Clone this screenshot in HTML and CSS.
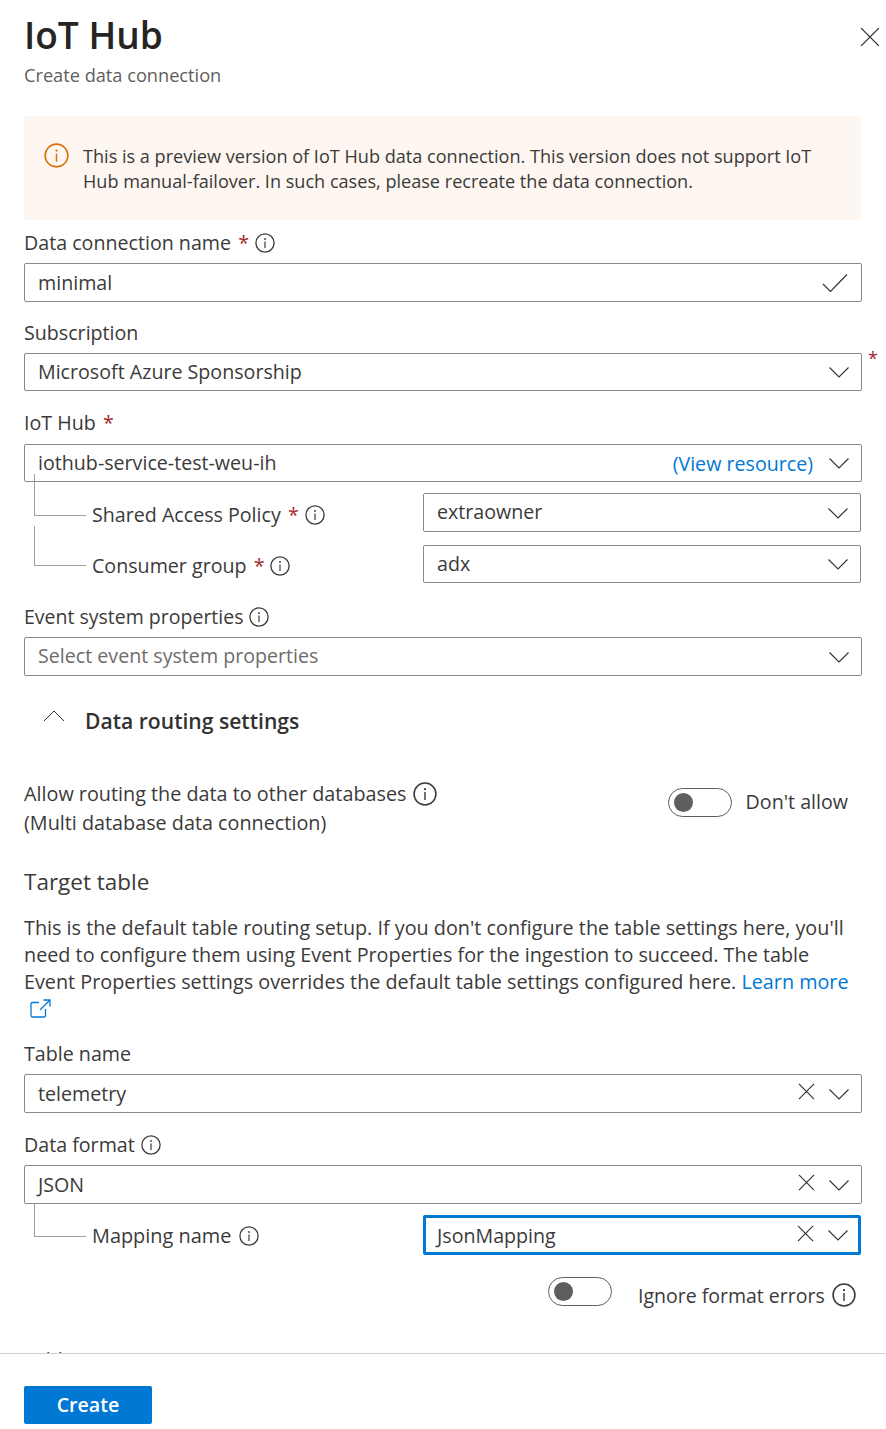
FILE: index.html
```html
<!DOCTYPE html>
<html lang="en">
<head>
<meta charset="utf-8">
<title>IoT Hub</title>
<link rel="stylesheet" href="styles.css">
</head>
<body>
<svg class="defs" aria-hidden="true">
  <symbol id="chev" viewBox="0 0 20 12"><path d="M.5 1.500 10 11 19.500 1.500" fill="none" stroke="currentColor" stroke-width="1.1"/></symbol>
  <symbol id="x" viewBox="0 0 18 18"><path d="M1 1 17 17M17 1 1 17" fill="none" stroke="currentColor" stroke-width="1.2"/></symbol>
  <symbol id="info" viewBox="0 0 20 20"><circle cx="10" cy="10" r="9.1" fill="none" stroke="currentColor" stroke-width="1.3"/><circle cx="10" cy="6" r=".9" fill="currentColor"/><path d="M10 8.400V15" stroke="currentColor" stroke-width="1.2"/></symbol>
</svg>
<div class="panel">
  <main class="scroll">
    <header class="head">
      <div>
        <h1 class="title">IoT Hub</h1>
        <p class="subtitle">Create data connection</p>
      </div>
      <button class="close" aria-label="Close"><svg class="ic-close"><use href="#x"/></svg></button>
    </header>

    <section class="banner">
      <svg class="ic-banner"><use href="#info"/></svg>
      <p class="banner-text">This is a preview version of IoT Hub data connection. This version does not support IoT Hub manual-failover. In such cases, please recreate the data connection.</p>
    </section>

    <div class="label l-name">Data connection name <span class="req">*</span><svg class="ic-info"><use href="#info"/></svg></div>
    <div class="input h-39 g-name"><span class="val">minimal</span>
      <svg class="ic-check" viewBox="0 0 26 20"><path d="M1 11 8.500 18.500 25 1.500" fill="none" stroke="currentColor" stroke-width="1.2"/></svg>
    </div>

    <div class="label l-sub">Subscription</div>
    <div class="req-wrap">
      <div class="input h-38 g-sub"><span class="val val-mid">Microsoft Azure Sponsorship</span><svg class="ic-chev"><use href="#chev"/></svg></div>
      <span class="req req-out">*</span>
    </div>

    <div class="label l-hub">IoT Hub <span class="req">*</span></div>
    <div class="input h-38 g-hub"><span class="val val-flat">iothub-service-test-weu-ih</span><a class="view">(View resource)</a><svg class="ic-chev"><use href="#chev"/></svg></div>

    <div class="sub-row r-policy">
      <span class="conn c-policy"></span>
      <div class="sub-label">Shared Access Policy <span class="req">*</span><svg class="ic-info"><use href="#info"/></svg></div>
      <div class="input h-39 sub-input"><span class="val val-up">extraowner</span><svg class="ic-chev"><use href="#chev"/></svg></div>
    </div>
    <div class="sub-row r-group">
      <span class="conn c-group"></span>
      <div class="sub-label">Consumer group <span class="req">*</span><svg class="ic-info"><use href="#info"/></svg></div>
      <div class="input h-38 sub-input"><span class="val val-flat">adx</span><svg class="ic-chev"><use href="#chev"/></svg></div>
    </div>

    <div class="label l-event">Event system properties<svg class="ic-info"><use href="#info"/></svg></div>
    <div class="input h-39 g-event"><span class="val val-mid placeholder">Select event system properties</span><svg class="ic-chev"><use href="#chev"/></svg></div>

    <div class="section-head">
      <svg class="ic-up" viewBox="0 0 22 12"><path d="M1 11 11 1 21 11" fill="none" stroke="currentColor" stroke-width="1"/></svg>
      <h2 class="section-title">Data routing settings</h2>
    </div>

    <div class="allow">
      <div class="allow-text">Allow routing the data to other databases<svg class="ic-info big"><use href="#info"/></svg><br>(Multi database data connection)</div>
      <div class="toggle-wrap"><span class="toggle"></span><span class="toggle-text">Don't allow</span></div>
    </div>

    <h3 class="target">Target table</h3>
    <p class="para">This is the default table routing setup. If you don't configure the table settings here, you'll need to configure them using Event Properties for the ingestion to succeed. The table Event Properties settings overrides the default table settings configured here. <a class="link">Learn more</a>
      <svg class="ic-ext" viewBox="0 0 21 19"><path d="M9 3.500H2.500A1.500 1.500 0 0 0 1 5V16.500A1.500 1.500 0 0 0 2.500 18H14A1.500 1.500 0 0 0 15.500 16.500V10M10 11 20 1M13.500 1H20V7.500" fill="none" stroke="currentColor" stroke-width="1.3"/></svg>
    </p>

    <div class="label l-table">Table name</div>
    <div class="input h-39 g-table"><span class="val">telemetry</span><svg class="ic-x"><use href="#x"/></svg><svg class="ic-chev"><use href="#chev"/></svg></div>

    <div class="label l-format">Data format<svg class="ic-info"><use href="#info"/></svg></div>
    <div class="input h-39 g-format"><span class="val">JSON</span><svg class="ic-x"><use href="#x"/></svg><svg class="ic-chev"><use href="#chev"/></svg></div>

    <div class="sub-row r-map">
      <span class="conn c-map"></span>
      <div class="sub-label">Mapping name<svg class="ic-info"><use href="#info"/></svg></div>
      <div class="input focus sub-input"><span class="val">JsonMapping</span><svg class="ic-x"><use href="#x"/></svg><svg class="ic-chev"><use href="#chev"/></svg></div>
    </div>

    <div class="ignore"><span class="toggle"></span><span class="ignore-text">Ignore format errors</span><svg class="ic-info big"><use href="#info"/></svg></div>

    <div class="label l-clip">Table mapping</div>
  </main>
  <footer class="footer"><button class="create">Create</button></footer>
</div>
</body>
</html>
```

FILE: styles.css
```css
* { box-sizing: border-box; }
html, body { margin: 0; padding: 0; background: #fff; }
body { font-family: "Open Sans", "Noto Sans", sans-serif; font-size: 19.65px; color: #3b3a39; line-height: 26px; }
.defs { display: none; }
.panel { width: 886px; height: 1429px; display: flex; flex-direction: column; overflow: hidden; }
.scroll { height: 1353px; overflow: hidden; padding: 0 24px; flex: none; }
.head { display: flex; justify-content: space-between; height: 116px; padding-top: 11px; }
.title { margin: 0; font-size: 37px; line-height: 48px; font-weight: 600; color: #252423; }
.subtitle { margin: 4px 0 0; font-size: 18.200px; line-height: 24px; color: #605e5c; }
.close { border: 0; background: none; padding: 0; margin: 16px -18px 0 0; height: 20px; color: #323130; }
.ic-close { width: 20px; height: 20px; display: block; }

.banner { height: 104px; width: 837px; background: #fdf6f1; display: flex; padding: 27px 40px 0 20px; }
.ic-banner { width: 25px; height: 25px; color: #d9730d; flex: none; }
.banner-text { margin: 1px 0 0 14px; line-height: 25px; font-size: 18.100px; }

.label { height: 26px; display: flex; align-items: center; white-space: pre; }
.req { color: #a4262c; margin-left: 2px; }
.ic-info { width: 20px; height: 20px; margin-left: 6px; color: #3b3a39; flex: none; }
.ic-info.big { width: 24px; height: 24px; margin-left: 7px; vertical-align: -5px; }

.input { border: 1px solid #8a8886; border-radius: 2px; display: flex; align-items: center; padding: 0 12px 0 13px; color: #3b3a39; background: #fff; }
.h-39 { height: 39px; }
.h-38 { height: 38px; }
.val { flex: 1; padding-top: 1px; }
.val-flat { padding-top: 0; }
.val-mid { padding-top: 0; margin-top: -1px; }
.val-up { padding-top: 0; margin-top: -2px; }
.placeholder { color: #6e6c6a; }
.ic-chev { width: 20px; height: 12px; color: #323130; flex: none; }
.ic-x { width: 17px; height: 17px; color: #323130; flex: none; margin: -4px 14px 0 0; }
.ic-check { width: 26px; height: 20px; color: #323130; margin-right: 1px; flex: none; }
.ic-up { width: 22px; height: 12px; color: #323130; flex: none; }

.l-name { margin-top: 10px; }
.g-name { margin-top: 7px; width: 838px; }
.l-sub { margin-top: 18px; }
.req-wrap { display: flex; margin-top: 7px; width: 838px; position: relative; }
.g-sub { width: 838px; }
.req-out { position: absolute; left: 844px; top: -8px; margin: 0; font-size: 18px; }
.l-hub { margin-top: 19px; }
.g-hub { margin-top: 8px; width: 838px; }
.view { color: #0078d4; margin: 2px 16px 0 0; }

.sub-row { position: relative; display: flex; align-items: center; justify-content: space-between; padding-left: 68px; width: 837px; }
.sub-label { display: flex; align-items: center; white-space: pre; }
.sub-input { width: 438px; }
.conn { position: absolute; left: 10px; width: 52px; border-left: 1px solid #a19f9d; border-bottom: 1px solid #a19f9d; }
.r-policy { margin-top: 11px; }
.r-policy .sub-label { margin-top: 5px; }
.r-group { margin-top: 13px; }
.r-group .sub-label { margin-top: 4px; }
.c-policy { top: -19px; height: 42px; }
.c-group { top: -19px; height: 40px; }
.r-map { margin-top: 11px; }
.r-map .sub-label { font-size: 19.900px; margin-top: 2px; }
.r-map .ic-info { margin-left: 8px; }
.c-map { top: -11px; height: 33px; }

.l-event { margin-top: 21px; font-size: 19.500px; }
.g-event { margin-top: 7px; width: 838px; }

.section-head { display: flex; align-items: center; margin: 31px 0 0 19px; height: 28px; }
.section-title { margin: 0 0 0 20px; font-size: 21.100px; font-weight: 600; color: #323130; }
.section-head .ic-up { margin-top: -10px; }

.allow { display: flex; justify-content: space-between; margin-top: 44px; }
.allow-text { line-height: 29px; font-size: 19.800px; }
.toggle-wrap { display: flex; align-items: center; height: 30px; margin: 8px 14px 0 0; }
.toggle { width: 64px; height: 29px; border: 1px solid #605e5c; border-radius: 15px; position: relative; display: block; flex: none; }
.toggle::after { content: ""; position: absolute; left: 5px; top: 4px; width: 19px; height: 19px; border-radius: 50%; background: #605e5c; }
.toggle-text { margin-left: 14px; }

.target { margin: 30px 0 0; font-size: 22.500px; font-weight: 400; line-height: 30px; }
.para { margin: 17px 0 0; line-height: 27px; width: 830px; font-size: 19.800px; }
.link { color: #0078d4; }
.ic-ext { width: 21px; height: 19px; color: #0078d4; margin: 4px 0 0 6px; display: block; }

.l-table { margin-top: 23px; }
.g-table { margin-top: 7px; width: 838px; }
.l-format { margin-top: 19px; }
.g-format { margin-top: 7px; width: 838px; }
.focus { height: 40px; border: 3px solid #0078d4; padding: 0 10px 0 11px; }

.ignore { display: flex; align-items: center; margin: 20px 0 0 524px; height: 32px; }
.ignore-text { margin: 10px 0 0 26px; font-size: 19.500px; }
.ignore .ic-info { margin-top: 8px; }

.l-clip { margin-top: 40px; }

.footer { height: 76px; border-top: 1px solid #d2d0ce; padding: 32px 24px 0; flex: none; }
.create { display: block; width: 128px; height: 38px; border: 0; border-radius: 2px; background: #0078d4; color: #fff; font: 600 19.650px/38px "Open Sans", "Noto Sans", sans-serif; padding: 0; }
```
